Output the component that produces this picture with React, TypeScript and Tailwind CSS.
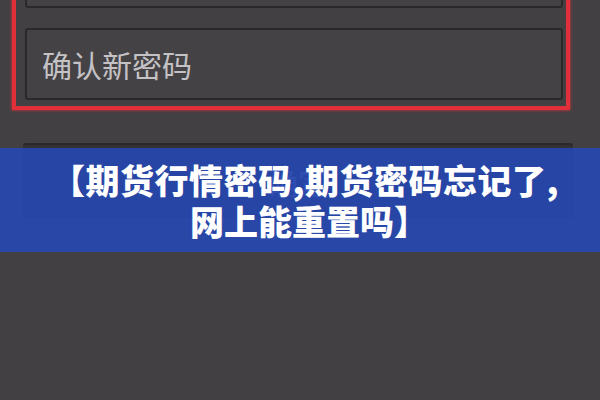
import React from "react";

const cjk = { fontFamily: '"Noto Sans CJK SC", "Noto Sans", sans-serif' };

export default function App() {
  return (
    <div
      className="relative w-[600px] h-[400px] overflow-hidden bg-[#434043]"
      style={cjk}
    >
      {/* highlighted form fields */}
      <div className="mt-[-60px] ml-[12px] w-[558px] border-4 border-[#e2303b] shadow-[0_0_3px_#e2303b] pl-[9px] pr-[3px] pb-[6px] flex flex-col gap-[20px]">
        <div className="h-[64px] rounded-[3px] border-2 border-[#2a282b] bg-[#454246]" />
        <div className="h-[72px] rounded-[3px] border-2 border-[#2a282b] bg-[#454246] flex items-center pl-[15px]">
          <span className="text-[30px] leading-none text-[#c4c2c4]">确认新密码</span>
        </div>
      </div>

      {/* submit button */}
      <div className="mt-[33px] ml-[23px] w-[550px] h-[75px] rounded-[3px] bg-[#333134] border-t-2 border-[#2a282b] flex items-center justify-center">
        <span className="text-[30px] text-[#7c7c94]">确定</span>
      </div>

      {/* title banner */}
      <div className="absolute left-0 top-[148px] w-full h-[104px] bg-[#2548b8]/[0.86] flex flex-col items-center justify-center">
        <div className="text-[34px] leading-[41px] font-black text-white tracking-[0.5px] pl-[10px]">
          【期货行情密码,期货密码忘记了,
        </div>
        <div className="text-[34px] leading-[41px] font-black text-white pl-[18px]">
          网上能重置吗】
        </div>
      </div>
    </div>
  );
}
